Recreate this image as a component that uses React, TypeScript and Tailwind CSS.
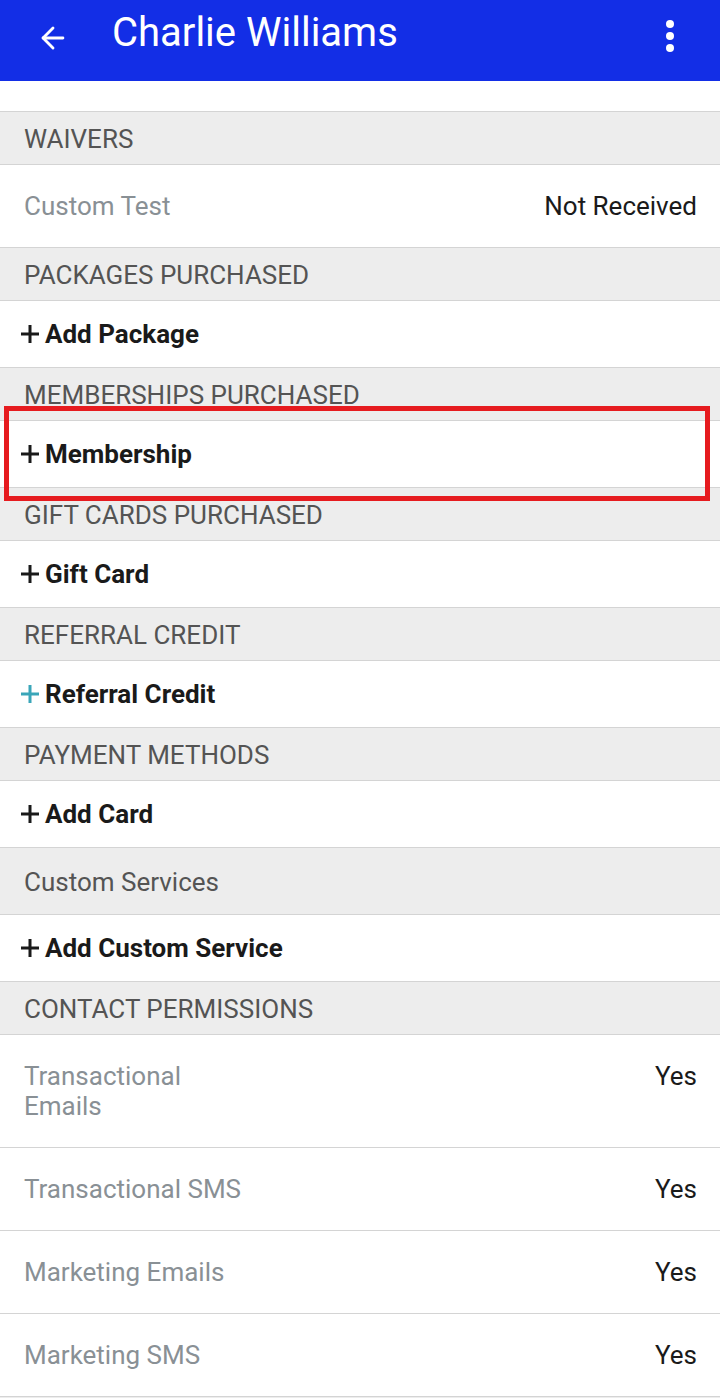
import { ArrowLeft } from 'lucide-react';

function SectionHeader({ title, tall = false }: { title: string; tall?: boolean }) {
  return (
    <div
      className={`${tall ? 'h-[67px]' : 'h-[53px]'} bg-[#ededed] border-b border-[#d4d4d4] flex items-center px-6 pt-[3px]`}
    >
      <span className="text-[26px] text-[#545454]">{title}</span>
    </div>
  );
}

function Plus({ color = '#1a1a1a' }: { color?: string }) {
  return (
    <svg width="22" height="22" viewBox="0 0 22 22" className="mr-[4px]">
      <path d="M11 2v18M2 11h18" stroke={color} strokeWidth="3" />
    </svg>
  );
}

function AddRow({ label, plusColor }: { label: string; plusColor?: string }) {
  return (
    <div className="h-[67px] bg-white border-b border-[#d4d4d4] flex items-center pl-[19px]">
      <Plus color={plusColor} />
      <span className="text-[26px] font-bold text-[#1a1a1a]">{label}</span>
    </div>
  );
}

function ValueRow({ label, value, tall = false }: { label: React.ReactNode; value: string; tall?: boolean }) {
  return (
    <div
      className={`bg-white border-b border-[#d4d4d4] flex justify-between pl-6 pr-[23px] ${
        tall ? 'h-[113px] items-start pt-[26px]' : 'h-[83px] items-center'
      }`}
    >
      <span className="text-[26px] text-[#899095] leading-[30px]">{label}</span>
      <span className="text-[26px] text-[#1a1a1a] leading-[30px]">{value}</span>
    </div>
  );
}

export default function App() {
  return (
    <div className="min-h-screen bg-[#ededed] font-['Roboto',sans-serif] relative">
      {/* App bar */}
      <div className="h-[81px] bg-[#132ee6] flex items-center pl-[36px] pr-[45px]">
        <ArrowLeft className="w-[34px] h-[34px] text-white -mt-[6px]" strokeWidth={2} />
        <h1 className="ml-[42px] text-[40px] text-white -mt-[16px] flex-1">Charlie Williams</h1>
        <svg width="10" height="34" viewBox="0 0 10 34" className="-mt-[10px]">
          <circle cx="5" cy="5" r="4" fill="white" />
          <circle cx="5" cy="17" r="4" fill="white" />
          <circle cx="5" cy="29" r="4" fill="white" />
        </svg>
      </div>
      <div className="h-[31px] bg-white border-b border-[#d4d4d4]" />

      <SectionHeader title="WAIVERS" />
      <ValueRow label="Custom Test" value="Not Received" />

      <SectionHeader title="PACKAGES PURCHASED" />
      <AddRow label="Add Package" />

      <SectionHeader title="MEMBERSHIPS PURCHASED" />
      <AddRow label="Membership" />

      <SectionHeader title="GIFT CARDS PURCHASED" />
      <AddRow label="Gift Card" />

      <SectionHeader title="REFERRAL CREDIT" />
      <AddRow label="Referral Credit" plusColor="#3aa6b9" />

      <SectionHeader title="PAYMENT METHODS" />
      <AddRow label="Add Card" />

      <SectionHeader title="Custom Services" tall />
      <AddRow label="Add Custom Service" />

      <SectionHeader title="CONTACT PERMISSIONS" />
      <ValueRow
        tall
        label={
          <>
            Transactional
            <br />
            Emails
          </>
        }
        value="Yes"
      />
      <ValueRow label="Transactional SMS" value="Yes" />
      <ValueRow label="Marketing Emails" value="Yes" />
      <ValueRow label="Marketing SMS" value="Yes" />

      {/* highlight annotation */}
      <div className="absolute left-[4px] top-[406px] w-[706px] h-[95px] border-[5px] border-[#e61b1f] pointer-events-none" />
    </div>
  );
}
